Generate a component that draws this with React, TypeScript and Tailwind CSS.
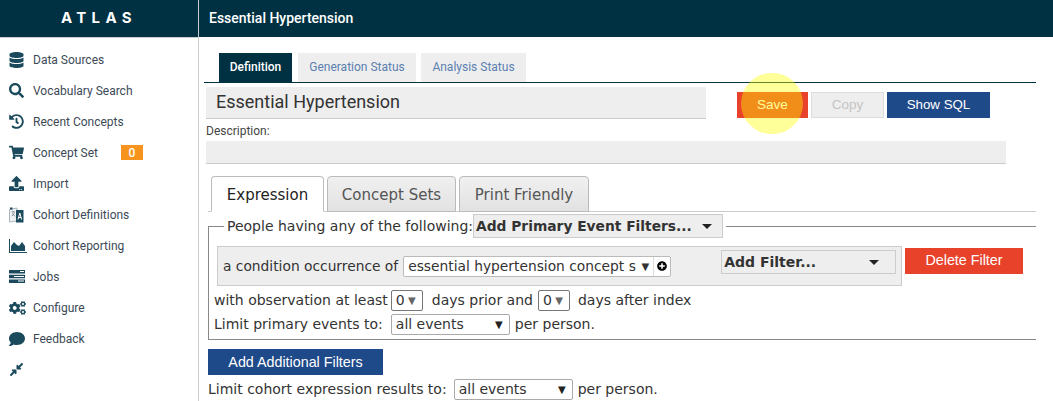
import { FaDatabase, FaSearch, FaHistory, FaShoppingCart, FaUpload, FaCogs, FaComment, FaCompressAlt, FaPlusCircle } from 'react-icons/fa';
import type { ReactNode } from 'react';

function JobsIcon() {
  return (
    <svg viewBox="0 0 16 13" className="h-[13px] w-4 fill-[#1b4a5c]">
      <path d="M0 0h16v3.5H0zM0 4.7h16v3.5H0zM0 9.4h16v3.5H0z" />
      <path fill="#fff" d="M11 1h4v1h-4zM5 5.9h10v1H5zM9 10.6h6v1H9z" />
    </svg>
  );
}

function DefinitionsIcon() {
  return (
    <svg viewBox="0 0 15 16" className="h-4 w-[15px]">
      <path d="M0.5 2.5L8 1v13l-7.5 1z" fill="#eef1f3" stroke="#9aa7ae" strokeWidth="0.8" />
      <path d="M2.5 5h3.5M4 4v1M3 9l2.5-3M3.5 6.5l2.5 3" stroke="#6f8088" strokeWidth="0.8" fill="none" />
      <path d="M7 3h7.5v12.5H7z" fill="#1b4a5c" />
      <path d="M9 12.5l1.8-6.5 1.8 6.5M9.6 10.5h2.4" stroke="#fff" strokeWidth="1" fill="none" />
      <path d="M1 0.5h2.5v2H1z" fill="#1b4a5c" />
    </svg>
  );
}

function ReportingIcon() {
  return (
    <svg viewBox="0 0 18 14" className="h-[14px] w-[18px] fill-[#1b4a5c]">
      <path d="M0 0h1v13h17v1H0z" />
      <path d="M2 12V7l3-4 3 3 2 1 3-4 3 4v5z" />
    </svg>
  );
}

const navItems: { label: string; icon: ReactNode }[] = [
  { label: 'Data Sources', icon: <FaDatabase className="h-4 w-[15px]" /> },
  { label: 'Vocabulary Search', icon: <FaSearch className="h-[15px] w-[15px]" /> },
  { label: 'Recent Concepts', icon: <FaHistory className="h-[15px] w-[15px]" /> },
  { label: 'Concept Set', icon: <FaShoppingCart className="h-[15px] w-[15px]" /> },
  { label: 'Import', icon: <FaUpload className="h-[15px] w-[15px]" /> },
  { label: 'Cohort Definitions', icon: <DefinitionsIcon /> },
  { label: 'Cohort Reporting', icon: <ReportingIcon /> },
  { label: 'Jobs', icon: <JobsIcon /> },
  { label: 'Configure', icon: <FaCogs className="h-4 w-[17px]" /> },
  { label: 'Feedback', icon: <FaComment className="h-4 w-4" /> },
  { label: '', icon: <FaCompressAlt className="h-[15px] w-[15px]" /> },
];

function Sidebar() {
  return (
    <aside className="flex w-[199px] shrink-0 flex-col border-r border-[#ccc] bg-white">
      <div className="flex h-[37px] items-center justify-center bg-[#003142] font-['Inter',sans-serif] text-[15px] font-bold tracking-[0.36em] text-white">
        ATLAS
      </div>
      <nav className="flex flex-col border-t border-[#ccc] pt-[6px]">
        {navItems.map((item) => (
          <div key={item.label || 'collapse'} className="flex h-[31px] items-center text-[#1b4a5c]">
            <span className="flex w-[33px] justify-start pl-[9px]">{item.icon}</span>
            <span className="text-[12px] text-[#3c4a57]">{item.label}</span>
            {item.label === 'Concept Set' && (
              <span className="ml-[23px] flex h-[15px] w-[22px] items-center justify-center bg-[#f7941d] text-[12px] font-medium text-white">0</span>
            )}
          </div>
        ))}
      </nav>
    </aside>
  );
}

function PageTab({ label, active, width }: { label: string; active?: boolean; width: string }) {
  return (
    <div className={`${width} ${active
      ? 'bg-[#003142] font-medium text-white'
      : 'bg-[#eee] text-[#5b7fb0]'} flex h-[29px] items-center justify-center pb-[1px] text-[12px]`}>
      {label}
    </div>
  );
}

function InnerTab({ label, active, width }: { label: string; active?: boolean; width: string }) {
  return (
    <div className={`${width} flex h-[36px] items-center justify-center rounded-t-[4px] border border-[#bbb] pt-[3px] text-[15px] ${active
      ? 'relative z-10 -mb-px border-b-white bg-white text-[#222]'
      : 'bg-gradient-to-b from-[#f0f0f0] to-[#e2e2e2] text-[#555]'}`}>
      {label}
    </div>
  );
}

function Select({ children, width, dark }: { children: ReactNode; width: string; dark?: boolean }) {
  return (
    <span className={`${width} ${dark ? 'border-[#777]' : 'border-[#aaa]'} inline-flex h-[21px] items-center justify-between rounded-[2px] border bg-white pl-[4px] pr-[6px]`}>
      <span className="whitespace-nowrap">{children}</span>
      <span className={`${dark ? 'text-[#666]' : 'text-[#222]'} ml-[3px] text-[10px]`}>▼</span>
    </span>
  );
}

function Caret() {
  return (
    <svg viewBox="0 0 10 5" className="h-[5px] w-[10px] shrink-0 fill-[#222]">
      <path d="M0 0h10L5 5z" />
    </svg>
  );
}

export default function App() {
  return (
    <div className="flex h-[401px] w-[1053px] overflow-hidden bg-white font-['Roboto',sans-serif]">
      <Sidebar />
      <main className="relative min-w-0 flex-1">
        <div className="flex h-[37px] items-center bg-[#003142] pl-[10px] text-[14px] font-medium text-white">
          Essential Hypertension
        </div>

        <div className="ml-[5px] mr-[17px] mt-[16px] flex h-[30px] gap-[5px] border-b border-[#003142] pl-[15px]">
          <PageTab label="Definition" active width="mr-[1px] w-[73px]" />
          <PageTab label="Generation Status" width="w-[118px]" />
          <PageTab label="Analysis Status" width="w-[105px]" />
        </div>

        <div className="ml-[7px] mt-[4px] flex">
          <div className="flex h-[32px] w-[500px] items-center border-b border-[#ccc] bg-[#eee] pb-[2px] pl-[10px] text-[18px] text-[#333]">
            Essential Hypertension
          </div>
          <div className="ml-[31px] mt-[5px] flex h-[26px] gap-[3px] font-['Liberation_Sans',sans-serif] text-[13.5px]">
            <div className="flex w-[71px] items-center justify-center bg-[#e8432a] text-white">Save</div>
            <div className="flex w-[73px] items-center justify-center border border-[#ddd] bg-[#eee] text-[#c4c4c4]">Copy</div>
            <div className="flex w-[103px] items-center justify-center bg-[#1f4a8a] text-[13.3px] text-white">Show SQL</div>
          </div>
        </div>

        <div className="ml-[7px] mt-[3px] text-[12px] leading-[18px] text-[#444]">Description:</div>
        <div className="ml-[7px] mt-[1px] h-[23px] w-[800px] border-b border-[#ccc] bg-[#eee]" />

        <div className="ml-[9px] mr-[17px] mt-[12px] font-['DejaVu_Sans',sans-serif] text-[#333]">
          <div className="flex h-[36px] gap-[3px] border-b border-[#ccc] pl-[3px]">
            <InnerTab label="Expression" active width="w-[113px]" />
            <InnerTab label="Concept Sets" width="w-[129px]" />
            <InnerTab label="Print Friendly" width="w-[130px]" />
          </div>

          <fieldset className="mt-[2px] border-y border-l border-[#888] pb-[4px] pl-[8px] text-[14px]">
            <legend className="ml-[7px] flex h-[24px] items-center pl-[3px] pr-[3px]">
              <span>People having any of the following:</span>
              <span className="flex h-[24px] w-[250px] items-center justify-between border border-[#ccc] bg-[#eee] pl-[2px] pr-[10px] text-[13.8px] font-bold">
                Add Primary Event Filters...
                <Caret />
              </span>
            </legend>

            <div className="mt-[8px] flex items-start">
              <div className="flex h-[40px] w-[685px] items-center border border-[#ccc] bg-[#eee] pl-[5px] text-[13.8px]">
                <span>a condition occurrence of</span>
                <span className="ml-[5px] flex h-[21px] items-stretch rounded-[2px] border border-[#bbb] bg-white">
                  <span className="flex w-[249px] items-center justify-between pl-[4px] pr-[4px]">
                    <span className="whitespace-nowrap">essential hypertension concept s</span>
                    <span className="text-[10px]">▼</span>
                  </span>
                  <span className="flex w-[17px] items-center justify-center border-l border-[#ddd] text-[10px] text-black">
                    <FaPlusCircle />
                  </span>
                </span>
                <span className="-mt-[8px] ml-[50px] flex h-[24px] w-[175px] items-center justify-between border border-[#ccc] bg-[#eee] pl-[2px] pr-[16px] text-[14px] font-bold">
                  Add Filter...
                  <Caret />
                </span>
              </div>
              <div className="ml-[3px] mt-[2px] flex h-[26px] w-[118px] items-center justify-center bg-[#e8432a] font-['Liberation_Sans',sans-serif] text-[14.3px] text-white">
                Delete Filter
              </div>
            </div>

            <div className="-ml-[3px] mt-[3px] flex h-[22px] items-center">
              with observation at least
              <span className="ml-[3px] flex"><Select width="w-[32px]" dark>0</Select></span>
              <span className="ml-[9px]">days prior and</span>
              <span className="ml-[5px] flex"><Select width="w-[32px]" dark>0</Select></span>
              <span className="ml-[8px]">days after index</span>
            </div>
            <div className="-ml-[3px] mt-[2px] flex h-[22px] items-center">
              Limit primary events to:
              <span className="ml-[8px] flex"><Select width="w-[119px]">all events</Select></span>
              <span className="ml-[5px]">per person.</span>
            </div>
          </fieldset>

          <div className="mt-[9px] flex h-[26px] w-[175px] items-center justify-center bg-[#1f4a8a] pt-[1px] font-['Liberation_Sans',sans-serif] text-[14.3px] text-white">
            Add Additional Filters
          </div>
          <div className="mt-[3px] flex h-[22px] items-center text-[14px]">
            Limit cohort expression results to:
            <span className="ml-[7px] flex"><Select width="w-[119px]">all events</Select></span>
            <span className="ml-[5px]">per person.</span>
          </div>
        </div>

        <div className="pointer-events-none absolute left-[542px] top-[73px] h-[61px] w-[62px] rounded-full bg-[#ffff00]/40" />
      </main>
    </div>
  );
}
